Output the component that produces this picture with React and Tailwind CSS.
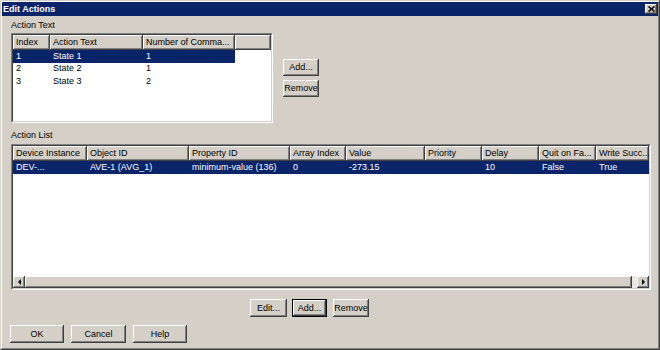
import React from 'react';

// classic 3D edges
const raised =
  'bg-[#d4d0c8] shadow-[inset_-1px_-1px_0_#404040,inset_1px_1px_0_#ffffff,inset_-2px_-2px_0_#808080]';

function Btn({ children, className = '', def = false }) {
  if (def) {
    return (
      <div className={`border border-black flex ${className}`}>
        <div className={`flex-1 flex items-center justify-center ${raised}`}>{children}</div>
      </div>
    );
  }
  return <div className={`flex items-center justify-center ${raised} ${className}`}>{children}</div>;
}

function Sunken({ className = '', children }) {
  return (
    <div className={`border border-t-[#808080] border-l-[#808080] border-r-white border-b-white flex ${className}`}>
      <div className="flex-1 flex flex-col border border-t-[#404040] border-l-[#404040] border-r-[#d4d0c8] border-b-[#d4d0c8] bg-white overflow-hidden">
        {children}
      </div>
    </div>
  );
}

function HeadCell({ w, label }) {
  return (
    <div className={`${w} h-[15px] shrink-0 flex items-center pl-[3px] whitespace-nowrap overflow-hidden ${raised}`}>
      {label}
    </div>
  );
}

const textCols = [
  { w: 'w-[37px]', label: 'Index' },
  { w: 'w-[93px]', label: 'Action Text' },
  { w: 'w-[92px]', label: 'Number of Comma...' },
];

const textRows = [
  ['1', 'State 1', '1'],
  ['2', 'State 2', '1'],
  ['3', 'State 3', '2'],
];

const listCols = [
  { w: 'w-[74px]', label: 'Device Instance' },
  { w: 'w-[102px]', label: 'Object ID' },
  { w: 'w-[101px]', label: 'Property ID' },
  { w: 'w-[56px]', label: 'Array Index' },
  { w: 'w-[79px]', label: 'Value' },
  { w: 'w-[57px]', label: 'Priority' },
  { w: 'w-[57px]', label: 'Delay' },
  { w: 'w-[57px]', label: 'Quit on Fa...' },
  { w: 'w-[53px]', label: 'Write Succ...' },
];

const listRow = ['DEV-...', 'AVE-1 (AVG_1)', 'minimum-value (136)', '0', '-273.15', '', '10', 'False', 'True'];

export default function App() {
  return (
    <div className="w-[660px] h-[350px] border border-t-[#d4d0c8] border-l-[#d4d0c8] border-r-[#404040] border-b-[#404040] font-['Liberation_Sans',Arial,sans-serif] text-[9px] leading-[11px] text-black">
      <div className="h-full flex flex-col bg-[#d4d0c8] border border-t-white border-l-white border-r-[#808080] border-b-[#808080]">
        {/* title bar */}
        <div className="h-[14px] bg-[#0a246a] flex items-center justify-between pl-[1px] pr-[1px]">
          <span className="text-white font-bold text-[9px]">Edit Actions</span>
          <div className={`w-[12px] h-[10px] flex items-center justify-center ${raised}`}>
            <svg width="7" height="6" viewBox="0 0 7 6">
              <path d="M0.5 0.5 L6.5 5.5 M6.5 0.5 L0.5 5.5" stroke="#000" strokeWidth="1.6" />
            </svg>
          </div>
        </div>

        <div className="flex-1 flex flex-col px-[9px]">
          <div className="mt-[4px] h-[11px]">Action Text</div>

          <div className="mt-[2px] flex">
            <Sunken className="w-[262px] h-[90px]">
              <div className="flex">
                {textCols.map((c) => (
                  <HeadCell key={c.label} w={c.w} label={c.label} />
                ))}
                <HeadCell w="flex-1" label="" />
              </div>
              {textRows.map((r, i) => (
                <div
                  key={i}
                  className={`flex h-[12.5px] items-center w-[222px] ${i === 0 ? 'bg-[#0a246a] text-white' : ''}`}
                >
                  {r.map((t, j) => (
                    <div key={j} className={`${textCols[j].w} pl-[3px] whitespace-nowrap`}>
                      {t}
                    </div>
                  ))}
                </div>
              ))}
            </Sunken>

            <div className="ml-[10px] mt-[26px] flex flex-col gap-[4px]">
              <Btn className="w-[36px] h-[17px]">Add...</Btn>
              <Btn className="w-[36px] h-[17px]">Remove</Btn>
            </div>
          </div>

          <div className="mt-[7px] h-[11px]">Action List</div>

          <Sunken className="mt-[3px] w-[640px] h-[146px]">
            <div className="flex">
              {listCols.map((c) => (
                <HeadCell key={c.label} w={c.w} label={c.label} />
              ))}
            </div>
            <div className="flex h-[13px] items-center bg-[#0a246a] text-white">
              {listRow.map((t, j) => (
                <div key={j} className={`${listCols[j].w} shrink-0 pl-[3px] whitespace-nowrap`}>
                  {t}
                </div>
              ))}
            </div>
            <div className="flex-1" />
            {/* horizontal scrollbar */}
            <div className="h-[12px] flex bg-[#eae8e4]">
              <div className={`w-[12px] flex items-center justify-center ${raised}`}>
                <div className="w-0 h-0 border-y-[3px] border-y-transparent border-r-[3px] border-r-black" />
              </div>
              <div className={`flex-1 ${raised}`} />
              <div className="w-[5px]" />
              <div className={`w-[12px] flex items-center justify-center ${raised}`}>
                <div className="w-0 h-0 border-y-[3px] border-y-transparent border-l-[3px] border-l-black" />
              </div>
            </div>
          </Sunken>

          <div className="mt-[9px] flex pl-[239px]">
            <Btn className="w-[37px] h-[18px]">Edit...</Btn>
            <Btn def className="ml-[5px] w-[35px] h-[18px]">Add...</Btn>
            <Btn className="ml-[6px] w-[36px] h-[18px]">Remove</Btn>
          </div>

          <div className="mt-[8px] flex -ml-[1px]">
            <Btn className="w-[54px] h-[18px]">OK</Btn>
            <Btn className="ml-[7px] w-[55px] h-[18px]">Cancel</Btn>
            <Btn className="ml-[7px] w-[54px] h-[18px]">Help</Btn>
          </div>
        </div>
      </div>
    </div>
  );
}
